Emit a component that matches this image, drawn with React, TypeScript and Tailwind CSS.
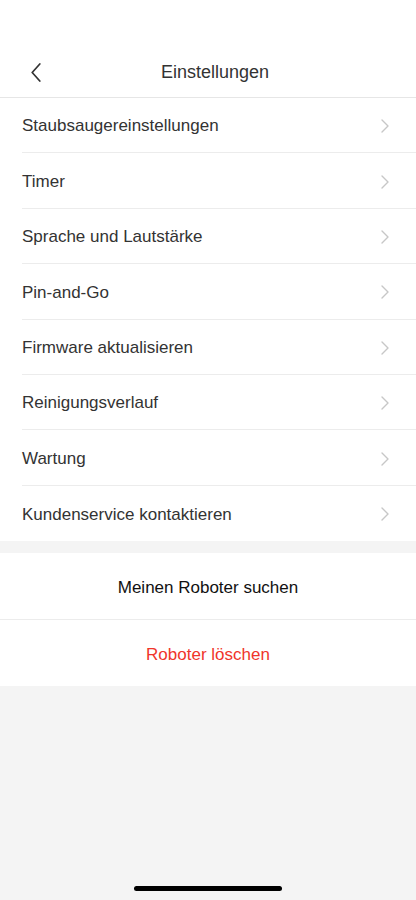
const items = [
  "Staubsaugereinstellungen",
  "Timer",
  "Sprache und Lautstärke",
  "Pin-and-Go",
  "Firmware aktualisieren",
  "Reinigungsverlauf",
  "Wartung",
  "Kundenservice kontaktieren",
];

function Chevron({ className }: { className?: string }) {
  return (
    <svg viewBox="0 0 8 14" className={className} fill="none" stroke="currentColor" strokeWidth="1.4" strokeLinecap="round" strokeLinejoin="round">
      <path d="M1 1l6 6-6 6" />
    </svg>
  );
}

export default function App() {
  return (
    <div className="flex min-h-[900px] w-[416px] flex-col bg-[#f4f4f4] font-['Liberation_Sans',sans-serif]">
      <header className="relative flex h-[98px] items-end justify-center border-b border-[#e6e6e6] bg-white pb-[11px]">
        <button className="absolute left-[30px] top-[63px] text-[#333]">
          <svg viewBox="0 0 12 20" className="h-[19px] w-[12px]" fill="none" stroke="currentColor" strokeWidth="1.8" strokeLinecap="round" strokeLinejoin="round">
            <path d="M10 1L2 10l8 9" />
          </svg>
        </button>
        <h1 className="ml-[14px] text-[18px] text-[#333]">Einstellungen</h1>
      </header>

      <ul className="bg-white">
        {items.map((label, i) => (
          <li key={label} className="flex h-[55.4px] pl-[22px]">
            <div
              className={
                "flex flex-1 items-center justify-between pr-[27px] pt-[2px] " +
                (i < items.length - 1 ? "border-b border-[#ececec]" : "")
              }
            >
              <span className="text-[17px] text-[#333]">{label}</span>
              <Chevron className="h-[14px] w-[8px] text-[#c7c7c7]" />
            </div>
          </li>
        ))}
      </ul>

      <div className="mt-[12px] bg-white">
        <button className="flex h-[67px] w-full items-center justify-center border-b border-[#ececec] pt-[4px] text-[17px] text-[#111]">
          Meinen Roboter suchen
        </button>
        <button className="flex h-[66px] w-full items-center justify-center pt-[3px] text-[17px] text-[#f0352b]">
          Roboter löschen
        </button>
      </div>

      <div className="flex flex-1 items-end justify-center pb-[9px]">
        <div className="h-[5px] w-[148px] rounded-full bg-black" />
      </div>
    </div>
  );
}
